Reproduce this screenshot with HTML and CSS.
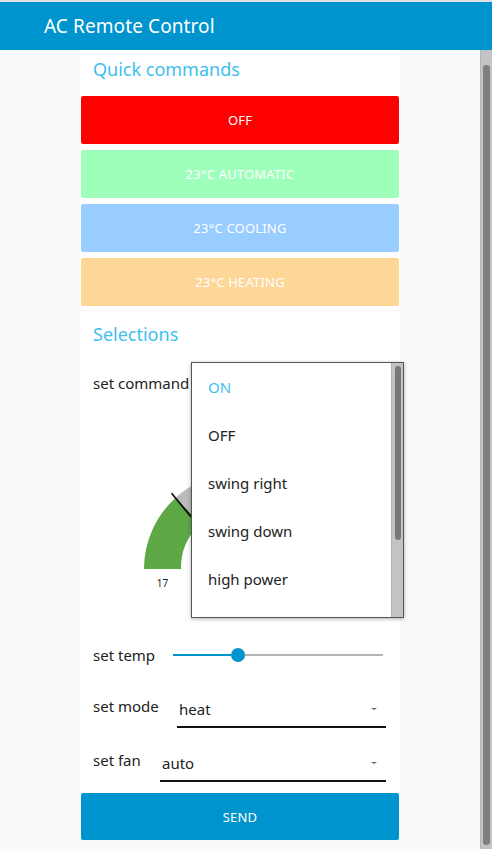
FILE: index.html
```html
<!DOCTYPE html>
<html>
<head>
<meta charset="utf-8">
<link rel="stylesheet" href="styles.css">
</head>
<body>
<header class="toolbar"><span class="toolbar-title">AC Remote Control</span></header>
<div class="shell">
  <main class="content">
    <section class="group group-quick">
      <h2 class="group-title quick-title">Quick commands</h2>
      <div class="buttons">
        <button class="qbtn qbtn-off">OFF</button>
        <button class="qbtn qbtn-auto">23°C AUTOMATIC</button>
        <button class="qbtn qbtn-cool">23°C COOLING</button>
        <button class="qbtn qbtn-heat">23°C HEATING</button>
      </div>
    </section>
    <section class="group group-sel">
      <h2 class="group-title sel-title">Selections</h2>
      <div class="row row-command">
        <span class="label">set command</span>
        <div class="menu">
          <ul class="menu-list">
            <li class="menu-item menu-item-active">ON</li>
            <li class="menu-item">OFF</li>
            <li class="menu-item">swing right</li>
            <li class="menu-item">swing down</li>
            <li class="menu-item">high power</li>
          </ul>
          <div class="menu-scroll"><div class="menu-thumb"></div></div>
        </div>
      </div>
      <div class="gauge">
        <svg width="320" height="224" viewBox="0 0 320 224">
          <path d="M64 162 A96 96 0 0 1 95.76 90.66 L120.52 116.41 A59 59 0 0 0 101 162 Z" fill="#5ea946"/>
          <path d="M95.76 90.66 A96 96 0 0 1 256 162 L219 162 A59 59 0 0 0 120.52 116.41 Z" fill="#bbbbbb"/>
          <polygon points="90.8,86.6 92.2,85.8 112.5,109.8 110.4,110.6" fill="#111"/>
          <text x="82.5" y="180" font-size="10" text-anchor="middle" fill="#222" class="gauge-txt">17</text>
        </svg>
      </div>
      <div class="row row-slider">
        <span class="label label-temp">set temp</span>
        <div class="slider">
          <div class="slider-fill"></div>
          <div class="slider-knob"></div>
          <div class="slider-rest"></div>
        </div>
      </div>
      <div class="row row-select">
        <span class="label label-mode">set mode</span>
        <div class="select"><span>heat</span><i class="caret"></i></div>
      </div>
      <div class="row row-select">
        <span class="label label-fan">set fan</span>
        <div class="select"><span>auto</span><i class="caret"></i></div>
      </div>
      <button class="send">SEND</button>
    </section>
  </main>
  <div class="scrollbar"><div class="scrollbar-thumb"></div></div>
</div>
</body>
</html>
```
FILE: styles.css
```css
* { box-sizing: border-box; }
html, body { margin: 0; padding: 0; }
body {
  width: 492px;
  height: 849px;
  overflow: hidden;
  background: #fafafa;
  font-family: "Noto Sans", "Open Sans", sans-serif;
  color: #222;
}
.toolbar {
  height: 50px;
  border-top: 2px solid #e2e2e2;
  background: #0094ce;
  display: flex;
  align-items: center;
  padding-left: 44px;
  padding-bottom: 1px;
}
.toolbar-title {
  color: #fff;
  font-size: 19px;
  letter-spacing: 0.1px;
}
.shell {
  display: flex;
  height: 799px;
}
.content {
  flex: 1;
  display: flex;
  flex-direction: column;
  align-items: center;
  gap: 1px;
}
.group {
  width: 320px;
  background: #fff;
}
.group-title {
  margin: 0;
  padding-left: 13px;
  font-weight: normal;
  font-size: 18px;
  color: #3dbff1;
}
.quick-title { height: 46px; line-height: 39px; }
.sel-title { height: 48px; line-height: 46px; }
.group-quick { padding-bottom: 4px; }
.buttons {
  display: flex;
  flex-direction: column;
  gap: 6px;
  padding: 0 1px;
}
.qbtn, .send {
  height: 48px;
  border: none;
  border-radius: 2px;
  color: #fff;
  font-family: inherit;
  font-size: 13px;
  letter-spacing: 0.2px;
}
.qbtn-off { background: #ff0000; }
.qbtn-auto { background: #9effbb; }
.qbtn-cool { background: #99ccff; }
.qbtn-heat { background: #fdd698; }
.row {
  display: flex;
  padding: 0 14px 0 13px;
}
.label { font-size: 15px; line-height: 20px; }
.row-command {
  position: relative;
  height: 48px;
  align-items: center;
}
.menu {
  position: absolute;
  left: 111px;
  top: 3px;
  width: 213px;
  height: 256px;
  background: #fff;
  border: 1px solid #555;
  box-shadow: 0 1px 4px rgba(0,0,0,0.3);
  display: flex;
  z-index: 2;
}
.menu-list {
  list-style: none;
  margin: 0;
  padding: 0;
  flex: 1;
}
.menu-item {
  height: 48px;
  line-height: 48px;
  padding-left: 16px;
  font-size: 15px;
  color: #222;
}
.menu-item-active { color: #3dbff1; }
.menu-scroll {
  width: 12px;
  background: #c3c3c3;
  border-left: 1px solid #b3b3b3;
  padding: 3px 2px 0 3px;
}
.menu-thumb {
  height: 174px;
  border-radius: 3px;
  background: #787878;
}
.gauge { height: 224px; }
.gauge svg { display: block; }
.gauge-txt { font-family: "Noto Sans", sans-serif; }
.row-slider {
  height: 48px;
  align-items: center;
}
.label-temp { width: 80px; }
.slider {
  flex: 1;
  display: flex;
  align-items: center;
  height: 16px;
  margin-right: 3px;
}
.slider-fill { width: 58px; height: 2px; background: #0094ce; }
.slider-knob { width: 14px; height: 14px; border-radius: 50%; background: #0094ce; }
.slider-rest { flex: 1; height: 2px; background: #b5b5b5; }
.row-select {
  height: 54px;
  align-items: flex-start;
}
.row-select .label { margin-top: 17px; }
.label-mode { width: 84px; }
.label-fan { width: 67px; }
.select {
  flex: 1;
  margin-top: 17px;
  height: 32px;
  border-bottom: 2px solid #111;
  display: flex;
  align-items: center;
  justify-content: space-between;
  padding: 0 9px 4px 2px;
  font-size: 15px;
}
.caret {
  width: 0;
  height: 0;
  border-left: 3px solid transparent;
  border-right: 3px solid transparent;
  border-top: 2px solid #666;
}
.send {
  display: block;
  width: 318px;
  margin: 6px 1px 0;
  height: 47px;
  background: #0094ce;
}
.scrollbar {
  width: 12px;
  background: #c4c4c4;
  border-left: 1px solid #b5b5b5;
  padding: 15px 2px 4px 2px;
}
.scrollbar-thumb {
  height: 100%;
  border-radius: 3px;
  background: #7f7f7f;
}
```
